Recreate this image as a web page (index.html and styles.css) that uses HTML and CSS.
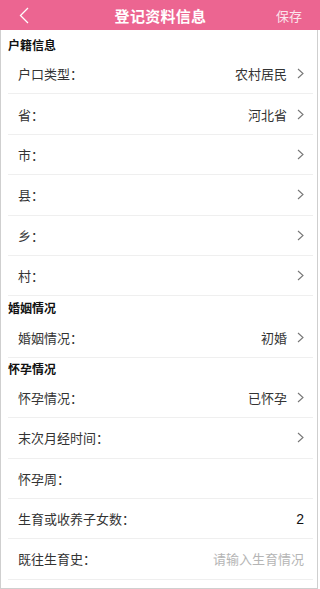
FILE: index.html
```html
<!DOCTYPE html>
<html lang="zh">

<head>
    <meta charset="UTF-8">
    <meta name="viewport" content="width=device-width, initial-scale=1.0">
    <title>登记资料信息</title>
    <link rel="stylesheet" href="styles.css">
</head>

<body>
    <!-- top bar -->
    <div class="topbar">
        <svg class="back" width="10" height="17" viewBox="0 0 10 17">
            <path d="M9 1 L1.5 8.5 L9 16" fill="none" stroke="#fff" stroke-width="1.3" />
        </svg>
        <h1>登记资料信息</h1>
        <span class="save">保存</span>
    </div>

    <div class="page">
        <div class="section-title first">户籍信息</div>
        <div class="row">
            <span class="label">户口类型：</span>
            <span class="value">农村居民</span>
            <svg class="arrow" width="7" height="11" viewBox="0 0 7 11"><path d="M1 1 L6 5.5 L1 10" /></svg>
        </div>
        <div class="row">
            <span class="label">省：</span>
            <span class="value">河北省</span>
            <svg class="arrow" width="7" height="11" viewBox="0 0 7 11"><path d="M1 1 L6 5.5 L1 10" /></svg>
        </div>
        <div class="row">
            <span class="label">市：</span>
            <span class="value"></span>
            <svg class="arrow" width="7" height="11" viewBox="0 0 7 11"><path d="M1 1 L6 5.5 L1 10" /></svg>
        </div>
        <div class="row">
            <span class="label">县：</span>
            <span class="value"></span>
            <svg class="arrow" width="7" height="11" viewBox="0 0 7 11"><path d="M1 1 L6 5.5 L1 10" /></svg>
        </div>
        <div class="row">
            <span class="label">乡：</span>
            <span class="value"></span>
            <svg class="arrow" width="7" height="11" viewBox="0 0 7 11"><path d="M1 1 L6 5.5 L1 10" /></svg>
        </div>
        <div class="row">
            <span class="label">村：</span>
            <span class="value"></span>
            <svg class="arrow" width="7" height="11" viewBox="0 0 7 11"><path d="M1 1 L6 5.5 L1 10" /></svg>
        </div>

        <div class="section-title">婚姻情况</div>
        <div class="row">
            <span class="label">婚姻情况：</span>
            <span class="value">初婚</span>
            <svg class="arrow" width="7" height="11" viewBox="0 0 7 11"><path d="M1 1 L6 5.5 L1 10" /></svg>
        </div>

        <div class="section-title third">怀孕情况</div>
        <div class="row">
            <span class="label">怀孕情况：</span>
            <span class="value">已怀孕</span>
            <svg class="arrow" width="7" height="11" viewBox="0 0 7 11"><path d="M1 1 L6 5.5 L1 10" /></svg>
        </div>
        <div class="row">
            <span class="label">末次月经时间：</span>
            <span class="value"></span>
            <svg class="arrow" width="7" height="11" viewBox="0 0 7 11"><path d="M1 1 L6 5.5 L1 10" /></svg>
        </div>
        <div class="row">
            <span class="label">怀孕周：</span>
            <span class="value"></span>
        </div>
        <div class="row">
            <span class="label">生育或收养子女数：</span>
            <span class="value num">2</span>
        </div>
        <div class="row">
            <span class="label">既往生育史：</span>
            <span class="value placeholder">请输入生育情况</span>
        </div>
    </div>
</body>

</html>
```

FILE: styles.css
```css
body {
    margin: 0;
    font-family: "Noto Sans CJK SC", "Noto Sans", sans-serif;
    color: #333;
    background: #fff;
}

.topbar {
    height: 30px;
    background-color: #ec6591;
    display: grid;
    grid-template-columns: 1fr auto 1fr;
    align-items: center;
    padding: 0 18px 0 19px;
}

.topbar h1 {
    margin: 0;
    font-size: 15px;
    font-weight: bold;
    color: #fff;
    letter-spacing: 0.3px;
}

.back {
    display: block;
}

.save {
    justify-self: end;
    font-size: 13px;
    color: #fbe3ec;
}

.page {
    width: 316px;
    height: 558px;
    border: 1px solid #cfcfcf;
    border-top: none;
    overflow: hidden;
}

.section-title {
    height: 21px;
    margin-left: 7px;
    display: flex;
    align-items: flex-end;
    font-size: 12px;
    font-weight: bold;
    line-height: 18px;
    color: #111;
}

.section-title.first {
    height: 24px;
}

.section-title.third {
    height: 20px;
}

.row {
    box-sizing: border-box;
    height: 40.4px;
    margin: 0 4px 0 7px;
    padding: 0 9px 0 10px;
    border-bottom: 1px solid #efefef;
    display: flex;
    align-items: center;
    font-size: 13px;
}

.label {
    flex: 1;
}

.value {
    color: #333;
}

.num {
    font-family: "Liberation Sans", sans-serif;
    font-size: 14px;
    color: #111;
}

.placeholder {
    color: #b5b5b5;
}

.arrow {
    margin-left: 10px;
    display: block;
}

.arrow path {
    fill: none;
    stroke: #777;
    stroke-width: 1.1;
}
```
